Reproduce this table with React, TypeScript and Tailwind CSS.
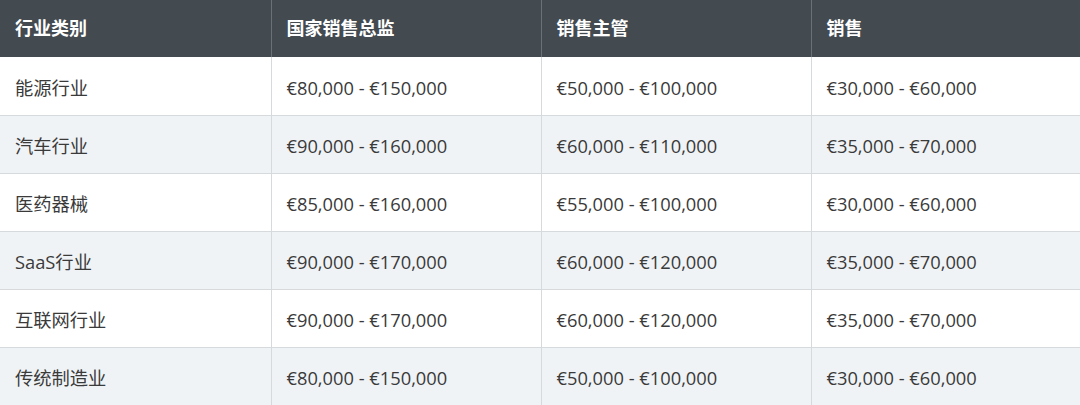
import React from "react";

const HEAD = ["行业类别", "国家销售总监", "销售主管", "销售"];

const ROWS = [
  ["能源行业", "€80,000 - €150,000", "€50,000 - €100,000", "€30,000 - €60,000"],
  ["汽车行业", "€90,000 - €160,000", "€60,000 - €110,000", "€35,000 - €70,000"],
  ["医药器械", "€85,000 - €160,000", "€55,000 - €100,000", "€30,000 - €60,000"],
  ["SaaS行业", "€90,000 - €170,000", "€60,000 - €120,000", "€35,000 - €70,000"],
  ["互联网行业", "€90,000 - €170,000", "€60,000 - €120,000", "€35,000 - €70,000"],
  ["传统制造业", "€80,000 - €150,000", "€50,000 - €100,000", "€30,000 - €60,000"],
];

export default function App() {
  return (
    <div
      className="w-[1080px] h-[405px] bg-white overflow-hidden"
      style={{ fontFamily: '"Open Sans", "Noto Sans", "Noto Sans CJK SC", sans-serif' }}
    >
      <table className="w-full border-collapse table-fixed">
        <colgroup>
          <col className="w-[271px]" />
          <col className="w-[270px]" />
          <col className="w-[270px]" />
          <col />
        </colgroup>
        <thead>
          <tr className="h-[57px] bg-[#434a50]">
            {HEAD.map((h, i) => (
              <th
                key={h}
                className={`text-left px-[15px] text-[18px] font-bold text-white ${i > 0 ? "border-l border-[#6b7277]" : ""}`}
              >
                {h}
              </th>
            ))}
          </tr>
        </thead>
        <tbody>
          {ROWS.map((r, ri) => (
            <tr
              key={ri}
              className={`h-[58px] border-b border-[#d6dadd] ${ri % 2 === 1 ? "bg-[#f0f3f6]" : "bg-white"}`}
            >
              {r.map((c, ci) => (
                <td
                  key={ci}
                  className={`px-[15px] pt-[3px] text-[18.3px] text-[#3a3a3a] ${ci > 0 ? "border-l border-[#d6dadd]" : ""}`}
                >
                  {c}
                </td>
              ))}
            </tr>
          ))}
        </tbody>
      </table>
    </div>
  );
}
